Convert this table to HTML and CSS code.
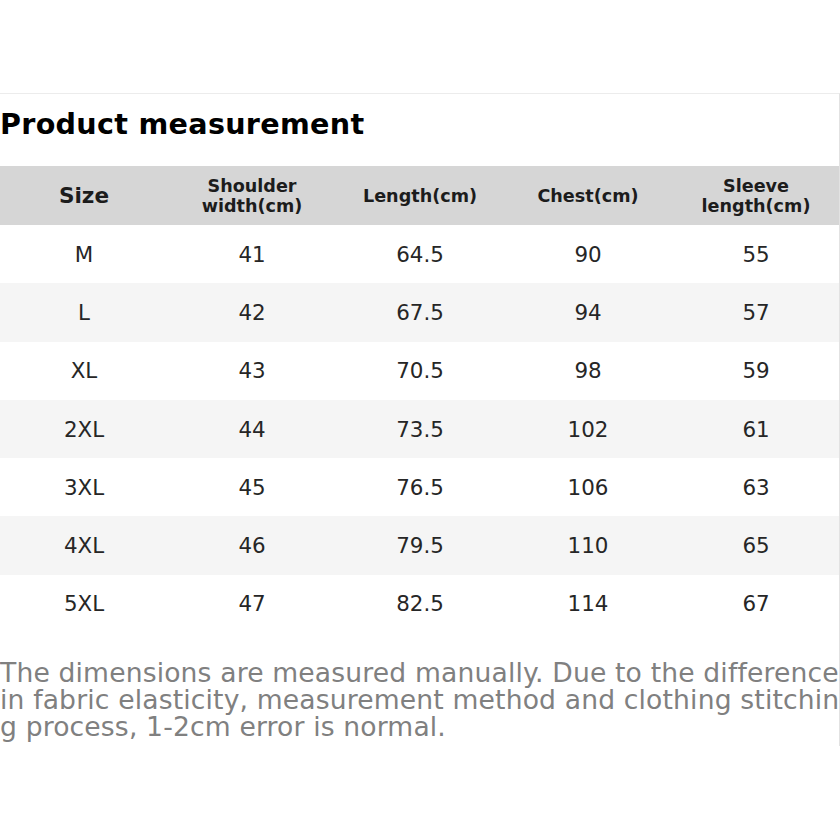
FILE: index.html
```html
<!DOCTYPE html>
<html lang="en">
<head>
<meta charset="utf-8">
<title>Product measurement</title>
<link rel="stylesheet" href="styles.css">
</head>
<body>
<section class="panel">
  <h1 class="title">Product measurement</h1>
  <table class="sizes">
    <thead>
      <tr>
        <th class="big">Size</th>
        <th>Shoulder<br>width(cm)</th>
        <th>Length(cm)</th>
        <th>Chest(cm)</th>
        <th>Sleeve<br>length(cm)</th>
      </tr>
    </thead>
    <tbody>
      <tr><td>M</td><td>41</td><td>64.5</td><td>90</td><td>55</td></tr>
      <tr><td>L</td><td>42</td><td>67.5</td><td>94</td><td>57</td></tr>
      <tr><td>XL</td><td>43</td><td>70.5</td><td>98</td><td>59</td></tr>
      <tr><td>2XL</td><td>44</td><td>73.5</td><td>102</td><td>61</td></tr>
      <tr><td>3XL</td><td>45</td><td>76.5</td><td>106</td><td>63</td></tr>
      <tr><td>4XL</td><td>46</td><td>79.5</td><td>110</td><td>65</td></tr>
      <tr><td>5XL</td><td>47</td><td>82.5</td><td>114</td><td>67</td></tr>
    </tbody>
  </table>
  <p class="note">The dimensions are measured manually. Due to the difference in fabric elasticity, measurement method and clothing stitching process, 1-2cm error is normal.</p>
</section>
</body>
</html>
```

FILE: styles.css
```css
html, body {
  margin: 0;
  padding: 0;
  background: #ffffff;
}

body {
  font-family: "DejaVu Sans", "Liberation Sans", sans-serif;
  width: 840px;
  height: 840px;
  overflow: hidden;
}

.panel {
  margin-top: 93px;
  width: 839px;
  border-top: 1px solid #ececec;
  border-right: 1px solid #e2e2e2;
  padding-bottom: 6px;
  overflow: hidden;
}

.title {
  margin: 0;
  padding: 12px 0 24px 0;
  height: 36px;
  line-height: 36px;
  font-size: 28.6px;
  letter-spacing: 0.3px;
  font-weight: bold;
  color: #000;
  white-space: nowrap;
}

.sizes {
  width: 840px;
  border-collapse: collapse;
  table-layout: fixed;
}

.sizes th {
  background: #d6d6d6;
  height: 59px;
  padding: 0;
  font-size: 17.6px;
  line-height: 20px;
  font-weight: bold;
  color: #1c1c1c;
  text-align: center;
  vertical-align: middle;
}

.sizes th.big {
  font-size: 21.6px;
}

.sizes td {
  height: 58.3px;
  padding: 0;
  font-size: 21.4px;
  color: #262626;
  text-align: center;
  vertical-align: middle;
}

.sizes tbody tr:nth-child(even) td {
  background: #f5f5f5;
}

.note {
  margin: 26px 0 0 0;
  width: 840px;
  font-size: 26.6px;
  letter-spacing: 0.15px;
  line-height: 27px;
  color: #808080;
  word-break: break-all;
}
```
